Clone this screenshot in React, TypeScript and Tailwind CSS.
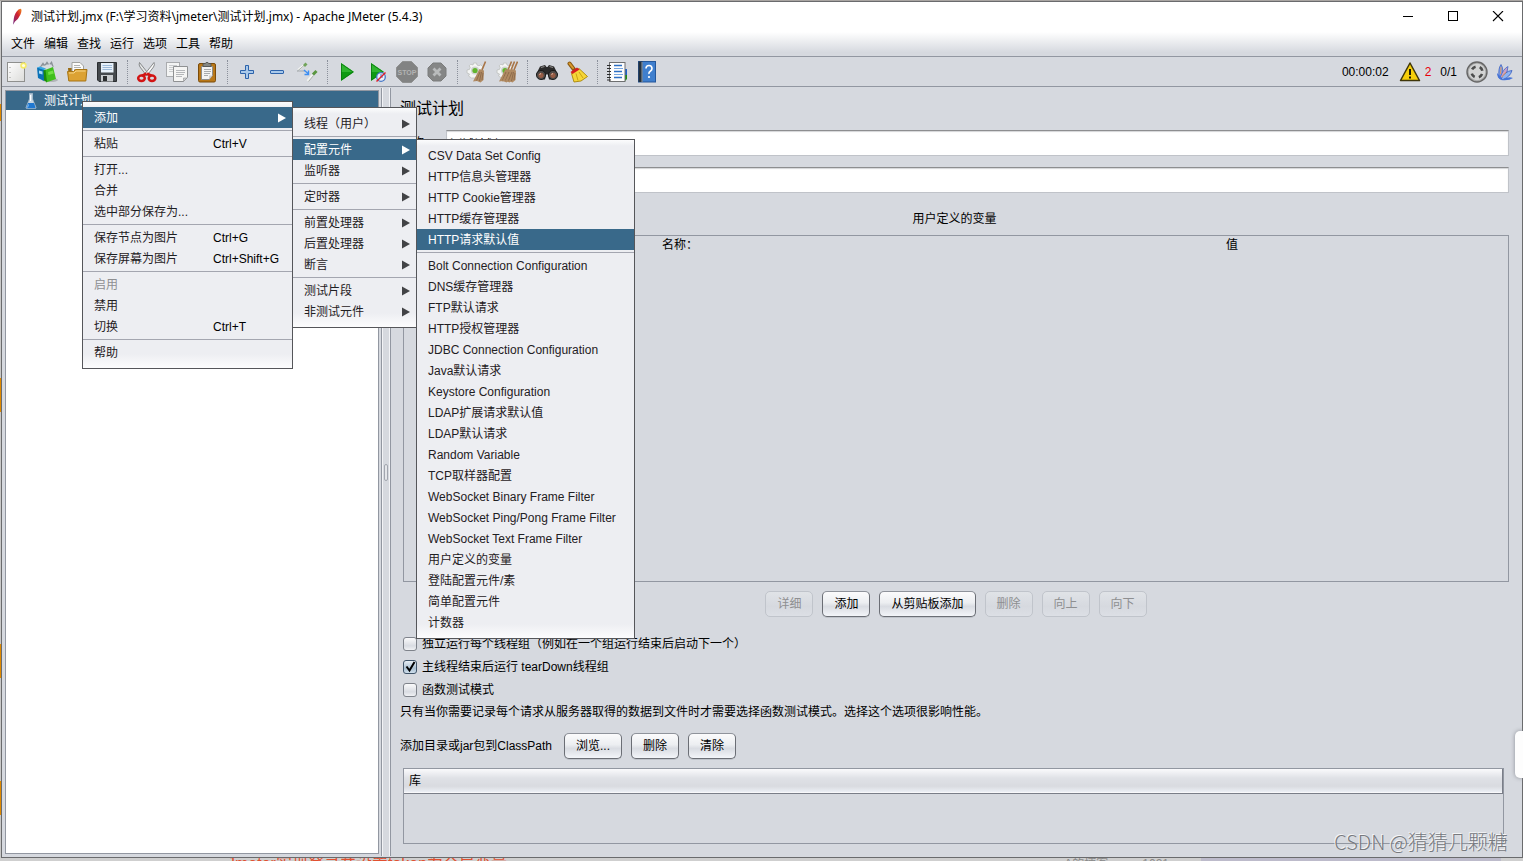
import { ReactNode } from "react";
import clsx from "clsx";

type MenuEntry = { label: string; shortcut?: string; submenu?: boolean; active?: boolean; disabled?: boolean } | "-";

const MENU_BAR = ["文件", "编辑", "查找", "运行", "选项", "工具", "帮助"];

const CONTEXT_MENU: MenuEntry[] = [
  { label: "添加", submenu: true, active: true },
  "-",
  { label: "粘贴", shortcut: "Ctrl+V" },
  "-",
  { label: "打开..." },
  { label: "合并" },
  { label: "选中部分保存为..." },
  "-",
  { label: "保存节点为图片", shortcut: "Ctrl+G" },
  { label: "保存屏幕为图片", shortcut: "Ctrl+Shift+G" },
  "-",
  { label: "启用", disabled: true },
  { label: "禁用" },
  { label: "切换", shortcut: "Ctrl+T" },
  "-",
  { label: "帮助" },
];

const ADD_MENU: MenuEntry[] = [
  { label: "线程（用户）", submenu: true },
  "-",
  { label: "配置元件", submenu: true, active: true },
  { label: "监听器", submenu: true },
  "-",
  { label: "定时器", submenu: true },
  "-",
  { label: "前置处理器", submenu: true },
  { label: "后置处理器", submenu: true },
  { label: "断言", submenu: true },
  "-",
  { label: "测试片段", submenu: true },
  { label: "非测试元件", submenu: true },
];

const CONFIG_MENU: MenuEntry[] = [
  { label: "CSV Data Set Config" },
  { label: "HTTP信息头管理器" },
  { label: "HTTP Cookie管理器" },
  { label: "HTTP缓存管理器" },
  { label: "HTTP请求默认值", active: true },
  "-",
  { label: "Bolt Connection Configuration" },
  { label: "DNS缓存管理器" },
  { label: "FTP默认请求" },
  { label: "HTTP授权管理器" },
  { label: "JDBC Connection Configuration" },
  { label: "Java默认请求" },
  { label: "Keystore Configuration" },
  { label: "LDAP扩展请求默认值" },
  { label: "LDAP默认请求" },
  { label: "Random Variable" },
  { label: "TCP取样器配置" },
  { label: "WebSocket Binary Frame Filter" },
  { label: "WebSocket Ping/Pong Frame Filter" },
  { label: "WebSocket Text Frame Filter" },
  { label: "用户定义的变量" },
  { label: "登陆配置元件/素" },
  { label: "简单配置元件" },
  { label: "计数器" },
];

function Svg({ children, size = 22 }: { children: ReactNode; size?: number }) {
  return (
    <svg width={size} height={size} viewBox={`0 0 ${size} ${size}`} fill="none" aria-hidden="true" className="shrink-0">
      {children}
    </svg>
  );
}

function NewIcon() {
  return (
    <Svg>
      <defs>
        <linearGradient id="page" x1="0" y1="0" x2="1" y2="1">
          <stop offset="0" stopColor="#fff" />
          <stop offset="1" stopColor="#dcdcda" />
        </linearGradient>
      </defs>
      <rect x="1.500" y="1.500" width="17" height="19" fill="url(#page)" stroke="#8f908e" />
      <path d="M4 6v1M4 11v1M4 16v1" stroke="#999" />
      <circle cx="17.500" cy="4.500" r="3.200" fill="#f5ea6a" />
      <circle cx="17.500" cy="4.500" r="1.600" fill="#fffde0" />
    </Svg>
  );
}

function TemplatesIcon() {
  return (
    <Svg>
      <ellipse cx="14" cy="19" rx="8" ry="2" fill="#8d8f92" opacity=".5" />
      <path d="M4 7 7 2.500 10 7M8 6 11 1.500 14 6M12 6 15.500 1.500 17 6" stroke="#8b9298" strokeWidth="1.500" />
      <path d="M4 6 14 3l3 3-8 5z" fill="#d7dce0" />
      <path d="M1 6.500 8 8v12l-6-3z" fill="#0b72b8" />
      <path d="M1 6.500 4 5.500 10 7.500 8 9z" fill="#39a8e4" />
      <path d="M3 9.500 6.500 10.500v3L3 12.500z" fill="#a6dcf7" />
      <path d="M9 9 17 6l3 12-10 3.500z" fill="#3fbf1c" />
      <path d="M7.500 9.500 9.500 8.500 11 21 8 19.500z" fill="#198c0a" />
      <path d="M12 11 17 9.500l.7 3L12.500 14z" fill="#6fe044" />
    </Svg>
  );
}

function OpenIcon() {
  return (
    <Svg>
      <path d="M2 7h5l1-2h10v14H3z" fill="#9a6b14" />
      <path d="M6 1.500h8L17.500 5v9H6z" fill="#fbfbfa" stroke="#a1a2a0" />
      <path d="M8 4.500h6M8 6.500h7M8 8.500h7" stroke="#b0b2b4" />
      <path d="M1.500 10.500h6l2-2h11.500l-1.200 11.500h-17z" fill="#dca233" stroke="#a87514" />
      <path d="M3 12h5l2-2h9.500" stroke="#f6d587" />
    </Svg>
  );
}

function SaveIcon() {
  return (
    <Svg>
      <path d="M1.500 1.500h19v19H3L1.500 19z" fill="#45494d" stroke="#2b2e31" />
      <rect x="5" y="2" width="12.500" height="9.500" fill="#e8f1fa" />
      <path d="M6.500 4.500h9.500M6.500 6.500h9.500M6.500 8.500h9.500" stroke="#9db9d8" />
      <rect x="5" y="14" width="12" height="6.500" fill="#c9cccf" />
      <rect x="7" y="15" width="4" height="5" fill="#2c2e30" />
    </Svg>
  );
}

function CutIcon() {
  return (
    <Svg>
      <path d="M3.500 1.500Q2.500 4 4 6l6.500 8.500 2.500-1z" fill="#e4e6e6" stroke="#7d7f80" strokeWidth=".9" />
      <path d="M18 1.500Q19 4 17.500 6L11 14.500l-2.500-1z" fill="#fafafa" stroke="#7d7f80" strokeWidth=".9" />
      <path d="M10.500 12.500 6 15M11 12.500 15.500 15" stroke="#d21414" strokeWidth="3" />
      <ellipse cx="5.500" cy="17.300" rx="3.300" ry="2.700" stroke="#d21414" strokeWidth="2.500" />
      <ellipse cx="16" cy="17.300" rx="3.300" ry="2.700" stroke="#d21414" strokeWidth="2.500" />
    </Svg>
  );
}

function CopyIcon() {
  return (
    <Svg>
      <rect x=".5" y="1.500" width="13" height="14" fill="#f3f4f4" stroke="#a9abae" />
      <path d="M3 4.500h8M3 6.500h8M3 8.500h5M3 10.500h4" stroke="#c9cbcd" />
      <path d="M7.500 5.500h14v11l-4 4h-10z" fill="#f5f5f4" stroke="#8f9193" />
      <path d="M10 9.500h9M10 11.500h9M10 13.500h8M10 15.500h6" stroke="#b5b7ba" />
      <path d="M21 17h-3.500v3.500z" fill="#cfd0d0" stroke="#8f9193" strokeWidth=".6" />
    </Svg>
  );
}

function PasteIcon() {
  return (
    <Svg>
      <rect x="2.500" y="2.500" width="17" height="18.500" rx="1.500" fill="#b97819" stroke="#7b4c0b" />
      <path d="M5.500 5.500h11v9l-3.500 4H5.500z" fill="#f4f4f3" stroke="#8d8e8d" />
      <path d="M8 8.500h7M8 10.500h7M8 12.500h6M8 14.500h4" stroke="#a9acae" />
      <path d="M16.500 14.500H13v4z" fill="#cfcfcf" />
      <path d="M7 2.500h2.200a2 2 0 0 1 3.600 0H15v3H7z" fill="#858783" stroke="#4d4f4c" strokeWidth=".8" />
    </Svg>
  );
}

function PlusIcon() {
  return (
    <Svg>
      <path d="M9.500 4.500h3v5h5v3h-5v5h-3v-5h-5v-3h5z" fill="#a9c9ea" stroke="#2d63ab" strokeLinejoin="round" />
    </Svg>
  );
}

function MinusIcon() {
  return (
    <Svg>
      <rect x="4.500" y="9.500" width="13" height="3" rx=".5" fill="#a9c9ea" stroke="#2d63ab" />
    </Svg>
  );
}

function ToggleIcon() {
  return (
    <Svg>
      <path d="M2 9 8 4" stroke="#f6f7f5" strokeWidth="2" />
      <path d="M1.500 10 8 4.500" stroke="#9aa09a" strokeWidth=".8" />
      <path d="M8 5 10.500 2.500" stroke="#71a35a" strokeWidth="2.800" />
      <path d="M1 10h8" stroke="#a5aaae" />
      <path d="m8 9 4 3.500M12.500 9.500v4h-4" stroke="#3d8ef2" strokeWidth="1.400" />
      <path d="m11.500 20 5-6" stroke="#f2f4f1" strokeWidth="2.200" />
      <path d="m12.500 20.500 5-6" stroke="#9aa09a" strokeWidth=".8" />
      <path d="m17 13.500 3.500-3.500" stroke="#5a963f" strokeWidth="3" />
    </Svg>
  );
}

function StartIcon({ blocked = false }: { blocked?: boolean }) {
  return (
    <Svg>
      <path d="M5 2 18 11 5 20z" fill="#0f9a13" />
      <path d="M5 2 18 11H5z" fill="#2fb52f" />
      <path d="M5.500 3 17 11 5.500 19z" stroke="#087a0c" strokeWidth=".8" />
      {blocked ? (
        <>
          <circle cx="15" cy="16" r="4.300" fill="#e9eef8" stroke="#4678c6" strokeWidth="1.300" />
          <path d="M15 13v3h2" stroke="#4678c6" />
          <path d="m10.500 20.500 9-9" stroke="#e0202a" strokeWidth="1.400" />
        </>
      ) : null}
    </Svg>
  );
}

function StopIcon() {
  return (
    <Svg>
      <path d="M6.500.5h9l6 6v9l-6 6h-9l-6-6v-9z" fill="#828383" stroke="#8f9090" />
      <text x="11" y="14" textAnchor="middle" fontFamily="Liberation Sans, sans-serif" fontSize="7" fontWeight="700" fill="#b2b3b3">
        STOP
      </text>
    </Svg>
  );
}

function ShutdownIcon() {
  return (
    <Svg>
      <path d="M7 2h8l5 5v8l-5 5H7l-5-5V7z" fill="#858686" stroke="#7b7c7c" />
      <path d="m7.500 7.500 7 7M14.500 7.500l-7 7" stroke="#b9bbbc" strokeWidth="2.800" />
    </Svg>
  );
}

function Broom({ x }: { x: number }) {
  return (
    <g transform={`translate(${x} 0)`}>
      <path d="M17.500.5 14 9" stroke="#a87446" strokeWidth="1.600" />
      <path d="M11.500 8 16 9.500 15.500 19 12.500 21.500 9 20 5 20.500z" fill="#b08a62" />
      <path d="M12 11 8.500 19.500M13.500 11 11.500 20M15 12l-1 7" stroke="#866546" strokeWidth=".8" />
    </g>
  );
}

function ClearIcon({ all = false }: { all?: boolean }) {
  return (
    <Svg>
      <path
        d="M7.500 2h3l.5 2 2 .8 1.800-1 2 2-1 1.800.7 2V15l-3 2H5.500l-3-2 1-2-2.500-1V9l2.500-.6.7-2-1-1.600 1.600-1.600L7 4z"
        fill="#f4f5f4"
        stroke="#bcbfbc"
        strokeWidth=".8"
      />
      <circle cx="9" cy="9.500" r="4" fill="#cfd3cf" />
      <circle cx="9" cy="9.500" r="2.600" fill="#62b52e" />
      {all ? <Broom x={-2} /> : null}
      <Broom x={all ? 1 : 2} />
      {all ? <Broom x={4} /> : null}
    </Svg>
  );
}

function SearchIcon() {
  return (
    <Svg>
      <path d="M4 5.500 9 4l1.500 2h1L13 4l5 1.500 4 8-5 5h-4l-1-5h-2l-1 5H5l-5-5z" fill="#2b2a2a" />
      <path d="M5 6.500 8.500 5.500M13.500 5.500 17 6.500" stroke="#8d8a88" strokeWidth="1.200" />
      <circle cx="5" cy="14" r="4.600" fill="#4b4947" stroke="#111" strokeWidth=".8" />
      <circle cx="17" cy="14" r="4.600" fill="#4b4947" stroke="#111" strokeWidth=".8" />
      <circle cx="5" cy="14.300" r="2.600" fill="#965c45" />
      <circle cx="17" cy="14.300" r="2.600" fill="#965c45" />
      <path d="M3.500 13.500 5 12.500M15.500 13.500 17 12.500" stroke="#e7c3b0" />
    </Svg>
  );
}

function ResetIcon() {
  return (
    <Svg>
      <path d="M3.500 2.500 8 8.500" stroke="#8a5a12" strokeWidth="4" strokeLinecap="round" />
      <path d="M3.500 2.500 7 7" stroke="#d99b2e" strokeWidth="2" strokeLinecap="round" />
      <path d="M5.500 12.500 13 7.500 21.500 15.500 15 20 8 21z" fill="#f6d638" stroke="#a98609" strokeWidth=".9" />
      <path d="M10 12.500 12 19.500M13 11l4 6" stroke="#c9a314" />
      <path d="M4.500 11 11 6.500l2.500 2L6.500 13z" fill="#d61f1f" />
    </Svg>
  );
}

function FunctionsIcon() {
  return (
    <Svg>
      <path d="M18 14h3v4l-2 2h-2z" fill="#198b12" />
      <path d="M18 8h3v6h-3z" fill="#1c62c8" />
      <rect x="3.500" y="1.500" width="15.500" height="19" fill="#fdfdfd" stroke="#6e6f70" />
      <path d="M1 4.500h4M1 7.500h4M1 10.500h4M1 13.500h4M1 16.500h4M1 19h4" stroke="#2c2d2e" />
      <path d="M8 4.500h8M8 10.500h8M8 16.500h8" stroke="#2c6fc4" strokeWidth="1.300" />
      <path d="M8 7.500h9M8 13.500h9" stroke="#76a5de" />
    </Svg>
  );
}

function HelpIcon() {
  return (
    <Svg>
      <rect x="2.500" y=".5" width="17" height="20.500" fill="#3f7fce" stroke="#24579b" />
      <rect x="2.500" y=".5" width="4" height="20.500" fill="#23313f" />
      <path d="M6 1v20" stroke="#e2e6ea" strokeWidth=".6" />
      <path d="M10 7.500q0-3 3-3t3 3q0 1.700-1.700 2.700T13 13" stroke="#fff" strokeWidth="1.600" />
      <circle cx="13" cy="16" r="1.100" fill="#fff" />
    </Svg>
  );
}

function WarningIcon() {
  return (
    <Svg>
      <path d="M11 2 20.500 19.500h-19z" fill="#f6cf0b" stroke="#3f3609" strokeWidth="1.500" strokeLinejoin="round" />
      <path d="M11 8v6M11 15.500v2" stroke="#1d1a07" strokeWidth="2" />
    </Svg>
  );
}

function RunStateIcon() {
  return (
    <Svg>
      <circle cx="11" cy="11" r="10" fill="#a9aaaa" stroke="#666" strokeWidth="1.400" />
      <circle cx="11" cy="11" r="8.300" fill="#d3d4d4" />
      <circle cx="11" cy="11" r="5.500" stroke="#4b4c4c" strokeWidth="2.600" strokeDasharray="4.300 4.340" strokeDashoffset="-2.200" />
    </Svg>
  );
}

function JMeterIcon() {
  return (
    <Svg>
      <path d="M5 17Q4 7 7 3.500 10 8 8 17z" fill="#7b9de4" stroke="#3459bd" strokeWidth=".7" />
      <path d="M6 17Q9 8 14 5.500 14 12 9 18z" fill="#c9a3c7" stroke="#3f66cc" strokeWidth=".8" />
      <path d="M7 18q4-8 11-8.500Q16 16 9 18.500z" fill="#8fb4f2" stroke="#3459bd" strokeWidth=".8" />
      <path d="M3 12q3 2 5 7 6-4 11-2-4 3-12 2Q3 17 3 12z" fill="#4573d8" />
      <path d="m8 16 4-5M6.500 13l.5-7" stroke="#e89a5e" />
    </Svg>
  );
}

function FeatherIcon() {
  return (
    <Svg size={18}>
      <defs>
        <linearGradient id="feather" x1="1" y1="0" x2="0" y2="1">
          <stop offset="0" stopColor="#f08a1d" />
          <stop offset=".4" stopColor="#d2232f" />
          <stop offset="1" stopColor="#6d2a86" />
        </linearGradient>
      </defs>
      <path d="M12.500.8Q14.500 1.500 12.500 6.500 10.500 11 7 13.500L5 16.800 5.500 13Q6 7 8.500 3.800 10.500 1 12.500.8z" fill="url(#feather)" />
    </Svg>
  );
}

function FlaskIcon() {
  return (
    <Svg size={16}>
      <path d="M6 .5h4M6.500 1v5L3 14.500q0 1 1 1h8q1 0 1-1L9.500 6V1z" fill="#c8d8e4" stroke="#a9bccb" strokeWidth=".8" />
      <path d="M5 10h6l1.500 4.500q0 .8-.7.800H4.200q-.7 0-.7-.8z" fill="#1f78d1" />
      <path d="M7.500 2v6" stroke="#fff" />
      <path d="m5.500 11.500-1 3" stroke="#8cc3f4" />
    </Svg>
  );
}

const TOOLBAR: { title: string; icon: ReactNode; off?: boolean }[][] = [
  [
    { title: "新建", icon: <NewIcon /> },
    { title: "模板", icon: <TemplatesIcon /> },
    { title: "打开", icon: <OpenIcon /> },
    { title: "保存", icon: <SaveIcon /> },
  ],
  [
    { title: "剪切", icon: <CutIcon /> },
    { title: "复制", icon: <CopyIcon /> },
    { title: "粘贴", icon: <PasteIcon /> },
  ],
  [
    { title: "展开", icon: <PlusIcon /> },
    { title: "收起", icon: <MinusIcon /> },
    { title: "切换", icon: <ToggleIcon /> },
  ],
  [
    { title: "启动", icon: <StartIcon /> },
    { title: "不停顿开始", icon: <StartIcon blocked /> },
    { title: "停止", icon: <StopIcon />, off: true },
    { title: "关闭", icon: <ShutdownIcon />, off: true },
  ],
  [
    { title: "清除", icon: <ClearIcon /> },
    { title: "清除全部", icon: <ClearIcon all /> },
  ],
  [
    { title: "查找", icon: <SearchIcon /> },
    { title: "重置查找", icon: <ResetIcon /> },
  ],
  [
    { title: "函数助手", icon: <FunctionsIcon /> },
    { title: "帮助", icon: <HelpIcon /> },
  ],
];

function TitleBar() {
  return (
    <header className="flex h-[30px] items-center bg-white pl-[6px] pr-[2px]">
      <FeatherIcon />
      <h1 className="ml-[5px] flex-1 font-['Noto_Sans','Noto_Sans_CJK_SC',sans-serif] text-[12px] leading-[18px]">
        测试计划.jmx (F:\学习资料\jmeter\测试计划.jmx) - Apache JMeter (5.4.3)
      </h1>
      <button aria-label="最小化" className="flex w-[45px] justify-center">
        <Svg size={12}>
          <path d="M1 5.500h10" stroke="#000" />
        </Svg>
      </button>
      <button aria-label="最大化" className="flex w-[45px] justify-center">
        <Svg size={12}>
          <rect x="1.500" y=".5" width="9" height="9" stroke="#000" />
        </Svg>
      </button>
      <button aria-label="关闭窗口" className="flex w-[45px] justify-center">
        <Svg size={12}>
          <path d="m1 0 10 10M11 0 1 10" stroke="#000" strokeWidth="1.100" />
        </Svg>
      </button>
    </header>
  );
}

function Toolbar() {
  return (
    <div className="flex h-[30px] items-center justify-between border-b border-[#9297a1]">
      <div className="flex items-center">
        {TOOLBAR.map((group, i) => (
          <div key={i} className="flex items-center">
            {i > 0 ? <span className="mr-1 ml-[5px] h-6 border-l border-dotted border-[#8b909b]" /> : null}
            {group.map((tool) => (
              <button key={tool.title} title={tool.title} disabled={tool.off} className="flex w-[30px] justify-center">
                {tool.icon}
              </button>
            ))}
          </div>
        ))}
      </div>
      <div className="flex items-center pr-[6px]">
        <span>00:00:02</span>
        <button aria-label="日志错误" className="ml-[10px] flex items-center gap-1 text-[#e8000b]">
          <WarningIcon />2
        </button>
        <span className="mr-[9px] ml-[9px]">0/1</span>
        <RunStateIcon />
        <span className="ml-[6px]">
          <JMeterIcon />
        </span>
      </div>
    </div>
  );
}

function Menu({ entries, className }: { entries: MenuEntry[]; className: string }) {
  return (
    <ul
      role="menu"
      className={clsx(
        "absolute border border-[#55565a] bg-[linear-gradient(#fcfcfd,#edeef2_6px,#edeef2_calc(100%-14px),#fcfcfd)] py-[5px] text-[#1f2023]",
        className,
      )}
    >
      {entries.map((entry, i) =>
        entry === "-" ? (
          <li key={i} role="separator" className="flex h-[5px] items-center">
            <span className="h-px w-full bg-[#a4a6b0]" />
          </li>
        ) : (
          <li key={i} role="none">
            <button
              role="menuitem"
              disabled={entry.disabled}
              className={clsx(
                "flex h-[21px] w-full items-center pr-[6px] pl-[11px] text-left whitespace-nowrap",
                entry.active && "bg-[#39698a] text-white",
                entry.disabled && "text-[#8e8f91]",
              )}
            >
              <span className={clsx(entry.shortcut && "w-[119px]")}>{entry.label}</span>
              {entry.shortcut ? <span className="text-black">{entry.shortcut}</span> : null}
              {entry.submenu ? (
                <svg width="8" height="10" viewBox="0 0 8 10" className="ml-auto" aria-hidden="true">
                  <path d="M0 .5 8 5 0 9.500z" fill={entry.active ? "#fff" : "#424346"} />
                </svg>
              ) : null}
            </button>
          </li>
        ),
      )}
    </ul>
  );
}

function Button({ children, disabled = false }: { children: ReactNode; disabled?: boolean }) {
  return (
    <button
      disabled={disabled}
      className={clsx(
        "h-[26px] rounded-[5px] border px-[11px] leading-[18px] whitespace-nowrap",
        disabled
          ? "border-[#c0c4cb] bg-[linear-gradient(#e0e3e7,#d6d9df_60%,#dcdfe5)] text-[#8e8f91]"
          : "border-[#6b6e75] border-t-[#8f939b] bg-[linear-gradient(#fbfbfc,#eceef1_45%,#d9dce2_60%,#f3f5f9)] shadow-[0_1px_0_#bfc3ca]",
      )}
    >
      {children}
    </button>
  );
}

function Check({ label, checked = false }: { label: string; checked?: boolean }) {
  return (
    <label className="ml-[3px] flex h-[23px] items-center gap-[5px]">
      <span className="grid">
        <input
          type="checkbox"
          defaultChecked={checked}
          className="peer col-start-1 row-start-1 size-[14px] appearance-none rounded-[3px] border border-[#7f838b] bg-[linear-gradient(#fafafb,#d9dce2_65%,#f0f1f4)] checked:border-[#3f5469] checked:bg-[linear-gradient(#e9f0f6,#a9bfd2_60%,#cfdfec)]"
        />
        <svg viewBox="0 0 14 14" className="invisible col-start-1 row-start-1 size-[14px] peer-checked:visible" aria-hidden="true">
          <path d="m3.500 6.500 3 4L11.500 2" fill="none" stroke="#000" strokeWidth="2" />
        </svg>
      </span>
      {label}
    </label>
  );
}

function Field({ id, label, value }: { id: string; label: string; value: string }) {
  return (
    <div className="flex items-center">
      <label htmlFor={id} className="w-[46px]">
        {label}
      </label>
      <input
        id={id}
        defaultValue={value}
        className="h-[26px] min-w-0 flex-1 border border-[#c0c3c9] border-t-[#8d8e90] bg-white px-[3px] shadow-[inset_0_1px_1px_#d4d5d8]"
      />
    </div>
  );
}

function TestPlanPanel() {
  return (
    <main className="flex min-w-0 flex-1 flex-col pt-[10px] pr-[13px] pb-[13px] pl-[9px]">
      <h2 className="text-[16px] leading-[24px]">测试计划</h2>
      <div className="mt-[9px] flex flex-col gap-[11px]">
        <Field id="name" label="名称：" value="测试计划" />
        <Field id="comments" label="注释：" value="" />
      </div>
      <h3 className="mt-[17px] text-center">用户定义的变量</h3>
      <div className="mt-[7px] ml-[3px] flex-1 border border-[#9297a1]">
        <table className="w-full table-fixed">
          <thead>
            <tr className="h-[18px]">
              <th className="p-0 font-normal">名称：</th>
              <th className="p-0 font-normal">值</th>
            </tr>
          </thead>
        </table>
      </div>
      <div className="mt-[9px] ml-[3px] flex justify-center gap-[9px]">
        <Button disabled>详细</Button>
        <Button>添加</Button>
        <Button>从剪贴板添加</Button>
        <Button disabled>删除</Button>
        <Button disabled>向上</Button>
        <Button disabled>向下</Button>
      </div>
      <div className="mt-[15px]">
        <Check label="独立运行每个线程组（例如在一个组运行结束后启动下一个）" />
        <Check label="主线程结束后运行 tearDown线程组" checked />
        <Check label="函数测试模式" />
      </div>
      <p className="leading-[23px]">只有当你需要记录每个请求从服务器取得的数据到文件时才需要选择函数测试模式。选择这个选项很影响性能。</p>
      <div className="mt-[9px] flex items-center gap-[9px]">
        <span className="w-[155px]">添加目录或jar包到ClassPath</span>
        <Button>浏览...</Button>
        <Button>删除</Button>
        <Button>清除</Button>
      </div>
      <div className="mt-[9px] mr-[5px] ml-[3px] h-[76px] border border-[#9297a1]">
        <table className="w-full">
          <thead>
            <tr className="h-[24px] border-r border-b border-[#7a7e88] bg-[linear-gradient(#fafafc,#dfe1e6_40%,#d9dbe0_75%,#eceff5)]">
              <th className="px-[5px] py-0 text-left font-normal">库</th>
            </tr>
          </thead>
        </table>
      </div>
    </main>
  );
}

export default function App() {
  return (
    <div className="relative flex h-screen flex-col overflow-hidden bg-[#cfcfcf] font-['Liberation_Sans','Noto_Sans_CJK_SC',sans-serif] text-[12px] leading-[18px] text-black">
      <div className="h-px bg-[#a9a5a2]" />
      <div className="flex min-h-0 flex-1">
        {/* sliver of the page behind the window */}
        <div className="w-px bg-[linear-gradient(#c9c9c9_12%,#e08a00_12%,#e08a00_14%,#c9c9c9_14%,#c9c9c9_44%,#e08a00_44%,#e08a00_48%,#c9c9c9_48%,#c9c9c9_75%,#e08a00_75%,#e08a00_79%,#c9c9c9_79%,#c9c9c9_91%,#e08a00_91%,#e08a00_95%,#c9c9c9_95%)]" />
        <div className="flex min-w-0 flex-1 flex-col border border-[#6a6b6d] bg-[#d6d9df]">
          <TitleBar />
          <nav className="flex h-[25px] items-center gap-[9px] border-b border-[#9297a1] bg-[linear-gradient(#fff,#d6d9df_85%)] px-[9px]">
            {MENU_BAR.map((item) => (
              <button key={item}>{item}</button>
            ))}
          </nav>
          <Toolbar />
          <div className="flex min-h-0 flex-1">
            <aside className="w-[379px] shrink-0 py-[3px] pr-[2px] pl-[3px]">
              <div role="tree" className="h-full border border-[#9297a1] bg-white">
                <div role="treeitem" aria-selected="true" className="flex h-[19px] items-center gap-[5px] bg-[#39698a] pl-[17px] text-white">
                  <FlaskIcon />
                  测试计划
                </div>
              </div>
            </aside>
            <div className="my-px flex w-[10px] items-center justify-center border-x border-[#9297a1] shadow-[inset_1px_0_#f2f3f6,inset_-1px_0_#f2f3f6]">
              <span className="h-[17px] w-[4px] rounded-[2px] border border-[#a2a6af] bg-[#e4e6ea]" />
            </div>
            <TestPlanPanel />
          </div>
        </div>
      </div>
      <div className="flex h-[3px] items-start overflow-hidden pl-[227px] font-['Liberation_Sans','Noto_Sans_CJK_SC',sans-serif] leading-[12px]">
        <span className="text-[16px] text-[#e2502f]">Jmeter实现登录并设置token为全局变量</span>
        <span className="ml-auto text-[#8a8a8a]">xrongA的博客</span>
        <span className="mr-[32px] ml-[34px] text-[#8a8a8a]">1021</span>
        <span className="mr-[22px] h-full w-[300px] bg-[#bdbbcb]" />
      </div>

      <Menu entries={CONFIG_MENU} className="top-[139px] left-[416px] w-[219px]" />
      <Menu entries={ADD_MENU} className="top-[107px] left-[292px] w-[125px]" />
      <Menu entries={CONTEXT_MENU} className="top-[101px] left-[82px] w-[211px]" />

      <div className="absolute top-[731px] right-0 h-[47px] w-[8px] rounded-l-[5px] bg-[#fdfdfd] shadow-[0_0_4px_#8c8f96]" />
      <p className="absolute right-[15px] bottom-[4px] font-['Noto_Sans_CJK_SC',sans-serif] text-[20px] leading-[30px] font-light text-[#77797e] [text-shadow:-1px_-1px_0_#f4f5f7]">
        CSDN @猜猜几颗糖
      </p>
    </div>
  );
}
